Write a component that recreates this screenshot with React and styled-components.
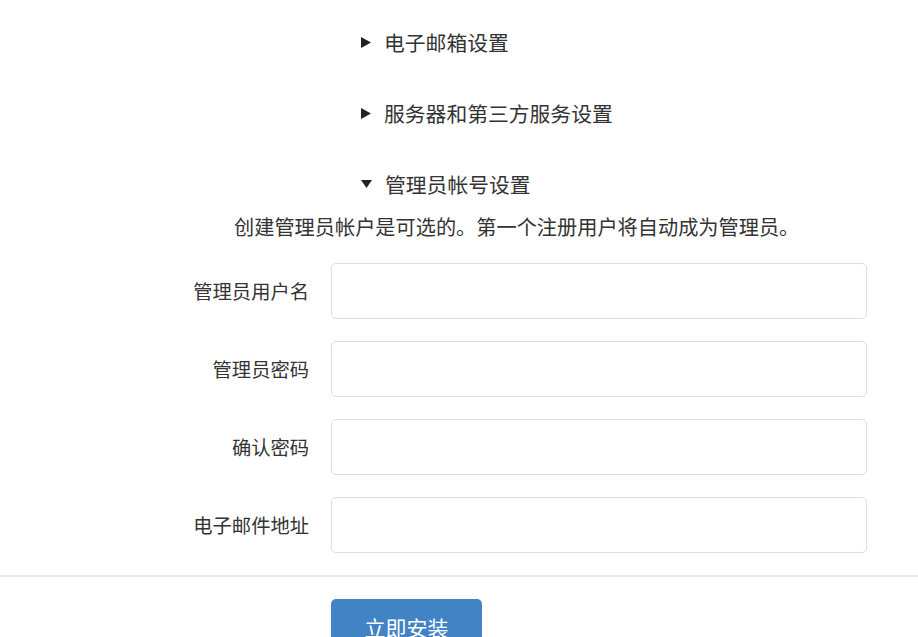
import React from "react";
import styled, { createGlobalStyle } from "styled-components";

const GlobalStyle = createGlobalStyle`
  html, body {
    margin: 0;
    padding: 0;
    background: #fff;
  }
  body {
    font-family: "Liberation Sans", "Noto Sans CJK SC", sans-serif;
    color: #333;
  }
  * {
    box-sizing: border-box;
  }
`;

const sections = [
  { title: "电子邮箱设置", open: false },
  { title: "服务器和第三方服务设置", open: false },
];

const fields = [
  { label: "管理员用户名", type: "text" },
  { label: "管理员密码", type: "password" },
  { label: "确认密码", type: "password" },
  { label: "电子邮件地址", type: "email" },
];

const Arrow = ({ open }) =>
  open ? (
    <ArrowSvg width="11" height="8" viewBox="0 0 11 8">
      <polygon points="0,0 11,0 5.5,8" fill="#222" />
    </ArrowSvg>
  ) : (
    <ArrowSvg width="10" height="11" viewBox="0 0 10 11">
      <polygon points="0,0 10,5.5 0,11" fill="#222" />
    </ArrowSvg>
  );

export default function App() {
  return (
    <>
      <GlobalStyle />
      <Page>
        {sections.map((s) => (
          <Section key={s.title}>
            <Summary>
              <Arrow open={s.open} />
              {s.title}
            </Summary>
          </Section>
        ))}
        <Section $open>
          <Summary>
            <Arrow open />
            管理员帐号设置
          </Summary>
          <Help>创建管理员帐户是可选的。第一个注册用户将自动成为管理员。</Help>
          <Form>
            {fields.map((f) => (
              <Field key={f.label}>
                <Label>{f.label}</Label>
                <Input type={f.type} />
              </Field>
            ))}
          </Form>
        </Section>
        <Divider />
        <Actions>
          <Button>立即安装</Button>
        </Actions>
      </Page>
    </>
  );
}

const Page = styled.div`
  width: 918px;
  height: 637px;
  overflow: hidden;
  padding-top: 28px;
`;
const Section = styled.div`
  margin-bottom: ${(props) => (props.$open ? "0" : "43px")};
`;
const Summary = styled.div`
  display: flex;
  align-items: center;
  gap: 13px;
  padding-left: 361px;
  height: 28px;
  font-family: "Noto Sans CJK SC", sans-serif;
  font-size: 20.8px;
  line-height: 28px;
  color: #333;
`;
const ArrowSvg = styled.svg`
  flex-shrink: 0;
`;
const Help = styled.p`
  margin: 14px 0 0;
  padding-left: 234px;
  height: 30px;
  font-family: "Noto Sans CJK SC", sans-serif;
  font-size: 20.2px;
  line-height: 30px;
  color: #333;
`;
const Form = styled.div`
  display: flex;
  flex-direction: column;
  gap: 22px;
  margin-top: 21px;
`;
const Field = styled.div`
  display: grid;
  grid-template-columns: 309px 536px;
  column-gap: 22px;
  align-items: center;
`;
const Label = styled.label`
  text-align: right;
  font-family: "Noto Sans CJK SC", sans-serif;
  font-size: 19.3px;
  color: #333;
`;
const Input = styled.input`
  height: 56px;
  width: 536px;
  border: 1px solid #dedede;
  border-radius: 5px;
  background: #fff;
  outline: none;
  padding: 0 14px;
  font-size: 18px;
`;
const Divider = styled.div`
  margin-top: 22px;
  height: 2px;
  background: #e8e8e8;
`;
const Actions = styled.div`
  padding: 22px 0 0 331px;
`;
const Button = styled.button`
  width: 151px;
  height: 56px;
  border: none;
  border-radius: 5px;
  background: #4183c4;
  color: #fff;
  font-family: "Noto Sans CJK SC", sans-serif;
  font-size: 21px;
  padding: 0;
  cursor: pointer;
`;
